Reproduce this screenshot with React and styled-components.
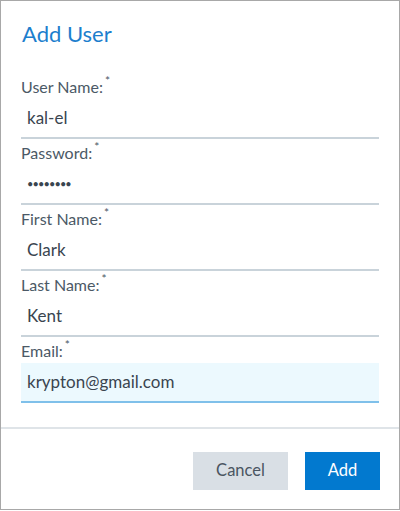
import React from 'react';
import styled, { createGlobalStyle } from 'styled-components';

const GlobalStyle = createGlobalStyle`
  html, body {
    margin: 0;
    padding: 0;
    background: #ffffff;
    font-family: Lato, "Open Sans", "Liberation Sans", sans-serif;
  }
`;

const Dialog = styled.div`
  width: 400px;
  height: 510px;
  box-sizing: border-box;
  border: 1px solid #a8a8a8;
  background: #ffffff;
  display: flex;
  flex-direction: column;
`;

const Body = styled.div`
  padding: 18px 20px 0 20px;
  flex: 1;
`;

const Title = styled.h2`
  margin: 0 0 28px 1px;
  font-size: 22px;
  line-height: 30px;
  font-weight: 400;
  color: #1c7ecd;
`;

const Field = styled.div`
  display: flex;
  flex-direction: column;
  margin-bottom: 4px;
`;

const Label = styled.label`
  font-size: 16px;
  line-height: 20px;
  height: 20px;
  color: #4b5966;
  margin-bottom: 2px;
`;

const Star = styled.sup`
  font-size: 12px;
  margin-left: 2px;
  vertical-align: 8px;
  line-height: 0;
`;

const Input = styled.input`
  box-sizing: border-box;
  width: 100%;
  height: 40px;
  border: none;
  border-bottom: 2px solid ${(p) => (p.$focused ? '#7fc0ea' : '#c9d3da')};
  background: ${(p) => (p.$focused ? '#ecf9fe' : '#ffffff')};
  padding: 0 6px 2px 6px;
  font-family: inherit;
  font-size: ${(p) => (p.$secret ? '11px' : '17px')};
  color: #3a4550;
  outline: none;
  letter-spacing: ${(p) => (p.$secret ? '-0.9px' : 'normal')};
`;

const Footer = styled.div`
  border-top: 2px solid #dfe4e8;
  display: flex;
  justify-content: flex-end;
  gap: 17px;
  padding: 23px 19px 19px 0;
`;

const Button = styled.button`
  height: 38px;
  width: ${(p) => p.$w}px;
  border: none;
  padding: 0 0 2px 0;
  font-family: inherit;
  font-size: 16.5px;
  cursor: pointer;
  background: ${(p) => (p.$primary ? '#0279cf' : '#d9dfe5')};
  color: ${(p) => (p.$primary ? '#ffffff' : '#4a5561')};
`;

const fields = [
  { label: 'User Name:', value: 'kal-el' },
  { label: 'Password:', value: '••••••••', secret: true },
  { label: 'First Name:', value: 'Clark' },
  { label: 'Last Name:', value: 'Kent' },
  { label: 'Email:', value: 'krypton@gmail.com', focused: true },
];

const App = () => {
  return (
    <>
      <GlobalStyle />
      <Dialog>
        <Body>
          <Title>Add User</Title>
          {fields.map((f) => (
            <Field key={f.label}>
              <Label>
                {f.label}
                <Star>*</Star>
              </Label>
              <Input
                readOnly
                defaultValue={f.value}
                $focused={f.focused}
                $secret={f.secret}
              />
            </Field>
          ))}
        </Body>
        <Footer>
          <Button $w={95}>Cancel</Button>
          <Button $w={75} $primary>
            Add
          </Button>
        </Footer>
      </Dialog>
    </>
  );
};

export default App;
